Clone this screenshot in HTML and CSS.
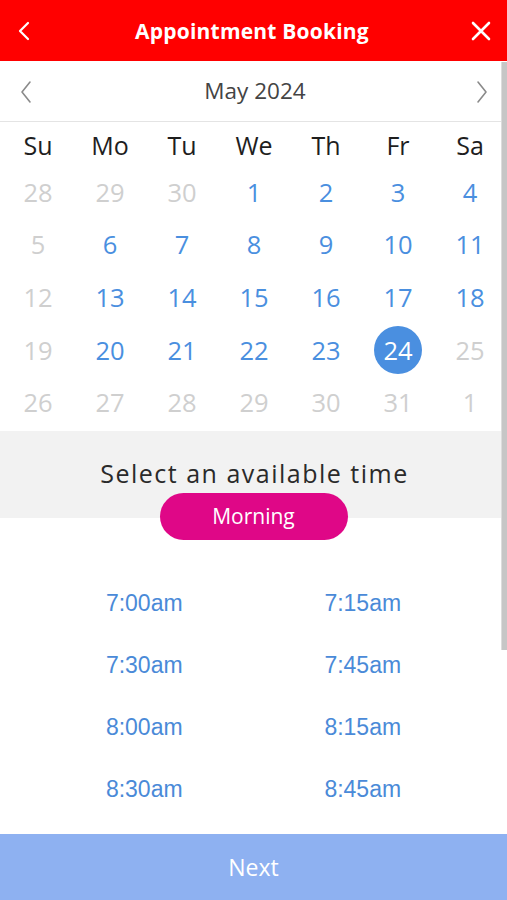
FILE: index.html
```html
<!DOCTYPE html>
<html lang="en">
<head>
<meta charset="utf-8">
<title>Appointment Booking</title>
<link rel="stylesheet" href="styles.css">
</head>
<body>
<div class="app">
  <header class="topbar">
    <button class="icon-btn back" aria-label="Back">
      <svg width="14" height="20" viewBox="0 0 14 20"><path d="M11 2 L3 10 L11 18" fill="none" stroke="#fff" stroke-width="2.2" stroke-linecap="round" stroke-linejoin="round"/></svg>
    </button>
    <h1 class="title">Appointment Booking</h1>
    <button class="icon-btn close" aria-label="Close">
      <svg width="20" height="20" viewBox="0 0 20 20"><path d="M2 2 L18 18 M18 2 L2 18" fill="none" stroke="#fff" stroke-width="2.6" stroke-linecap="round"/></svg>
    </button>
  </header>

  <main class="content">
    <div class="month-nav">
      <span class="chev">
        <svg width="14" height="24" viewBox="0 0 14 24"><path d="M11 2 L3 12 L11 22" fill="none" stroke="#8a8a8a" stroke-width="1.6" stroke-linecap="round" stroke-linejoin="round"/></svg>
      </span>
      <span class="month">May 2024</span>
      <span class="chev">
        <svg width="14" height="24" viewBox="0 0 14 24"><path d="M3 2 L11 12 L3 22" fill="none" stroke="#8a8a8a" stroke-width="1.6" stroke-linecap="round" stroke-linejoin="round"/></svg>
      </span>
    </div>

    <div class="calendar">
      <div class="wd">Su</div><div class="wd">Mo</div><div class="wd">Tu</div><div class="wd">We</div><div class="wd">Th</div><div class="wd">Fr</div><div class="wd">Sa</div>

      <div class="d off">28</div><div class="d off">29</div><div class="d off">30</div><div class="d">1</div><div class="d">2</div><div class="d">3</div><div class="d">4</div>
      <div class="d off">5</div><div class="d">6</div><div class="d">7</div><div class="d">8</div><div class="d">9</div><div class="d">10</div><div class="d">11</div>
      <div class="d off">12</div><div class="d">13</div><div class="d">14</div><div class="d">15</div><div class="d">16</div><div class="d">17</div><div class="d">18</div>
      <div class="d off">19</div><div class="d">20</div><div class="d">21</div><div class="d">22</div><div class="d">23</div><div class="d"><span class="sel">24</span></div><div class="d off">25</div>
      <div class="d off">26</div><div class="d off">27</div><div class="d off">28</div><div class="d off">29</div><div class="d off">30</div><div class="d off">31</div><div class="d off">1</div>
    </div>

    <section class="time-head">
      <h2 class="time-title">Select an available time</h2>
      <button class="pill">Morning</button>
    </section>

    <div class="slots">
      <a class="slot">7:00am</a><a class="slot">7:15am</a>
      <a class="slot">7:30am</a><a class="slot">7:45am</a>
      <a class="slot">8:00am</a><a class="slot">8:15am</a>
      <a class="slot">8:30am</a><a class="slot">8:45am</a>
    </div>
  </main>

  <button class="next">Next</button>

  <div class="scrollbar"></div>
</div>
</body>
</html>
```

FILE: styles.css
```css
* { box-sizing: border-box; }

html, body {
  margin: 0;
  padding: 0;
  height: 100%;
  background: #fff;
}

body {
  font-family: "Open Sans", "Liberation Sans", sans-serif;
}

.app {
  position: relative;
  height: 900px;
  display: flex;
  flex-direction: column;
  overflow: hidden;
}

.topbar {
  height: 61px;
  background: #ff0000;
  display: flex;
  align-items: center;
  justify-content: space-between;
  padding: 0 12px 0 12px;
  flex: none;
}

.icon-btn {
  background: none;
  border: 0;
  padding: 0;
  width: 24px;
  height: 24px;
  display: flex;
  align-items: center;
  justify-content: center;
}

.back { margin-top: 1px; }
.close { width: 38px; margin-right: -5px; }

.title {
  margin: 0;
  color: #fff;
  font-family: "Open Sans", sans-serif;
  font-weight: 700;
  font-size: 21px;
  letter-spacing: 0.2px;
  margin-left: 6px;
}

.content {
  flex: 1;
  display: flex;
  flex-direction: column;
}

.month-nav {
  height: 60px;
  margin-top: 1px;
  border-bottom: 1.5px solid #e4e4e4;
  display: flex;
  align-items: center;
  justify-content: space-between;
  padding: 0 18px 2px 19px;
}

.chev {
  display: flex;
  align-items: center;
  margin-top: 2px;
}

.month {
  font-size: 22.5px;
  color: #444;
  margin-left: 2px;
}

.calendar {
  display: grid;
  grid-template-columns: repeat(7, 72px);
  grid-template-rows: 46px repeat(5, 52.6px);
  padding-left: 2px;
}

.wd {
  display: flex;
  align-items: center;
  justify-content: center;
  font-size: 25px;
  color: #1e1e1e;
}

.d {
  display: flex;
  align-items: center;
  justify-content: center;
  font-size: 25.5px;
  color: #4a8fdf;
  padding-bottom: 5px;
}

.d.off { color: #cfcfcf; }

.sel {
  width: 48px;
  height: 48px;
  border-radius: 50%;
  background: #4a8fe0;
  color: #fff;
  display: flex;
  align-items: center;
  justify-content: center;
}

.time-head {
  display: flex;
  flex-direction: column;
  align-items: center;
  background: linear-gradient(#f2f2f2 87px, #fff 87px);
  padding-top: 27px;
}

.time-title {
  margin: 0;
  font-weight: 400;
  font-size: 25px;
  line-height: 31px;
  letter-spacing: 1.5px;
  color: #2a2a2a;
  margin-left: 2px;
}

.pill {
  margin-top: 4px;
  width: 188px;
  height: 47px;
  border: 0;
  border-radius: 24px;
  background: #df0787;
  color: #fff;
  font-family: "Open Sans", sans-serif;
  font-size: 21px;
  padding: 0;
}

.slots {
  display: grid;
  grid-template-columns: 1fr 1fr;
  grid-auto-rows: 62px;
  padding: 33px 35px 0 35px;
}

.slot {
  display: flex;
  align-items: center;
  justify-content: center;
  font-family: "Liberation Sans", Arial, sans-serif;
  font-size: 23px;
  color: #4a8ad8;
}

.next {
  flex: none;
  height: 66px;
  border: 0;
  background: #8eb1f1;
  color: #fff;
  font-family: "Open Sans", sans-serif;
  font-size: 23px;
  padding: 0;
}

.scrollbar {
  position: absolute;
  top: 62px;
  right: 0;
  width: 6px;
  height: 588px;
  background: #c6c6c6;
  border-left: 1px solid #dcdcdc;
}
```
